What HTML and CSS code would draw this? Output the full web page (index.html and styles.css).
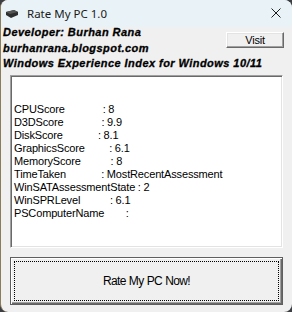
FILE: index.html
```html
<!DOCTYPE html>
<html lang="en">
<head>
    <meta charset="utf-8" />
    <title>Rate My PC 1.0</title>
<link rel="stylesheet" href="styles.css">
</head>
<body>
<div class="window">
  <div class="titlebar">
    <svg class="app-icon" width="14" height="10" viewBox="0 0 14 10">
      <polygon points="1,3 9,1 13,3 13,6 6,9 1,6" fill="#2e2e2e" />
      <polygon points="1,3 9,1 13,3 5,5" fill="#555" />
    </svg>
    <span class="title">Rate My PC 1.0</span>
    <svg class="close" width="10" height="10" viewBox="0 0 10 10">
      <path d="M0.5 0.5 L9.5 9.5 M9.5 0.5 L0.5 9.5" stroke="#1c1c1c" stroke-width="1" />
    </svg>
  </div>

  <div class="client">
    <div class="header">
      <div class="labels">
        <div>Developer: Burhan Rana</div>
        <div>burhanrana.blogspot.com</div>
        <div>Windows Experience Index for Windows 10/11</div>
      </div>
      <button class="btn visit">Visit</button>
    </div>

    <pre class="output">


CPUScore              : 8
D3DScore              : 9.9
DiskScore             : 8.1
GraphicsScore         : 6.1
MemoryScore           : 8
TimeTaken             : MostRecentAssessment
WinSATAssessmentState : 2
WinSPRLevel           : 6.1
PSComputerName        :</pre>

    <button class="btn rate"><span class="focus">Rate My PC Now!</span></button>
  </div>
</div>
</body>
</html>
```

FILE: styles.css
```css
html, body {
    margin: 0;
    height: 100%;
    background-color: #3b3f44;
}

.window {
    height: 312px;
    width: 292px;
    box-sizing: border-box;
    border-left: 1px solid #8c7c5c;
    border-radius: 8px;
    overflow: hidden;
    background-color: #f0f0f0;
    display: flex;
    flex-direction: column;
}

.titlebar {
    height: 27px;
    flex: none;
    background-color: #e9f3f7;
    display: flex;
    align-items: center;
    padding: 0 11px 0 4px;
    font-family: 'Noto Sans', 'Open Sans', sans-serif;
    font-size: 11.5px;
    color: #1a1a1a;
}

.app-icon {
    margin-right: 8px;
}

.title {
    flex: 1;
    margin-top: -1px;
}

.close {
    margin-top: -1px;
}

.client {
    flex: 1;
    display: flex;
    flex-direction: column;
    padding: 0 9px 0 2px;
}

.header {
    display: flex;
    align-items: flex-start;
    height: 48px;
}

.labels {
    flex: 1;
    min-width: 0;
    margin-top: -2px;
    font-family: 'Liberation Sans', Arial, sans-serif;
    font-weight: 700;
    font-style: italic;
    font-size: 11px;
    letter-spacing: 0.45px;
    line-height: 15.5px;
    color: #000;
    white-space: nowrap;
    -webkit-text-stroke: 0.3px #000;
}

.btn {
    background-color: #f0f0f0;
    color: #000;
    font-family: 'Liberation Sans', Arial, sans-serif;
    padding: 0;
    border-style: solid;
    border-width: 1px;
    border-color: #fff #696969 #696969 #fff;
    box-shadow: inset -1px -1px 0 #a0a0a0, inset 1px 1px 0 #e3e3e3;
}

.visit {
    flex: none;
    width: 58px;
    height: 16px;
    margin-top: 5px;
    margin-right: -1px;
    font-size: 11px;
    letter-spacing: -0.2px;
    line-height: 12px;
}

.output {
    margin: 0 0 0 7px;
    height: 173px;
    box-sizing: border-box;
    background-color: #fff;
    border-style: solid;
    border-width: 1px;
    border-color: #a0a0a0 #fff #fff #a0a0a0;
    box-shadow: inset 1px 1px 0 #696969, inset -1px -1px 0 #e3e3e3;
    padding: 1px 0 0 3px;
    font-family: 'Liberation Sans', Arial, sans-serif;
    font-size: 11px;
    letter-spacing: -0.15px;
    word-spacing: -0.2px;
    line-height: 13px;
    color: #000;
    overflow: hidden;
}

.rate {
    margin: 9px 0 0 7px;
    height: 48px;
    border: 1px solid #5f5f5f;
    box-shadow: inset 1px 1px 0 #fff, inset -1px -1px 0 #696969, inset -2px -2px 0 #a0a0a0;
    padding: 3px;
    display: flex;
}

.focus {
    flex: 1;
    border: 1px dotted #000;
    display: flex;
    align-items: center;
    justify-content: center;
    font-size: 12px;
    letter-spacing: -0.65px;
    word-spacing: 0.5px;
}
```
